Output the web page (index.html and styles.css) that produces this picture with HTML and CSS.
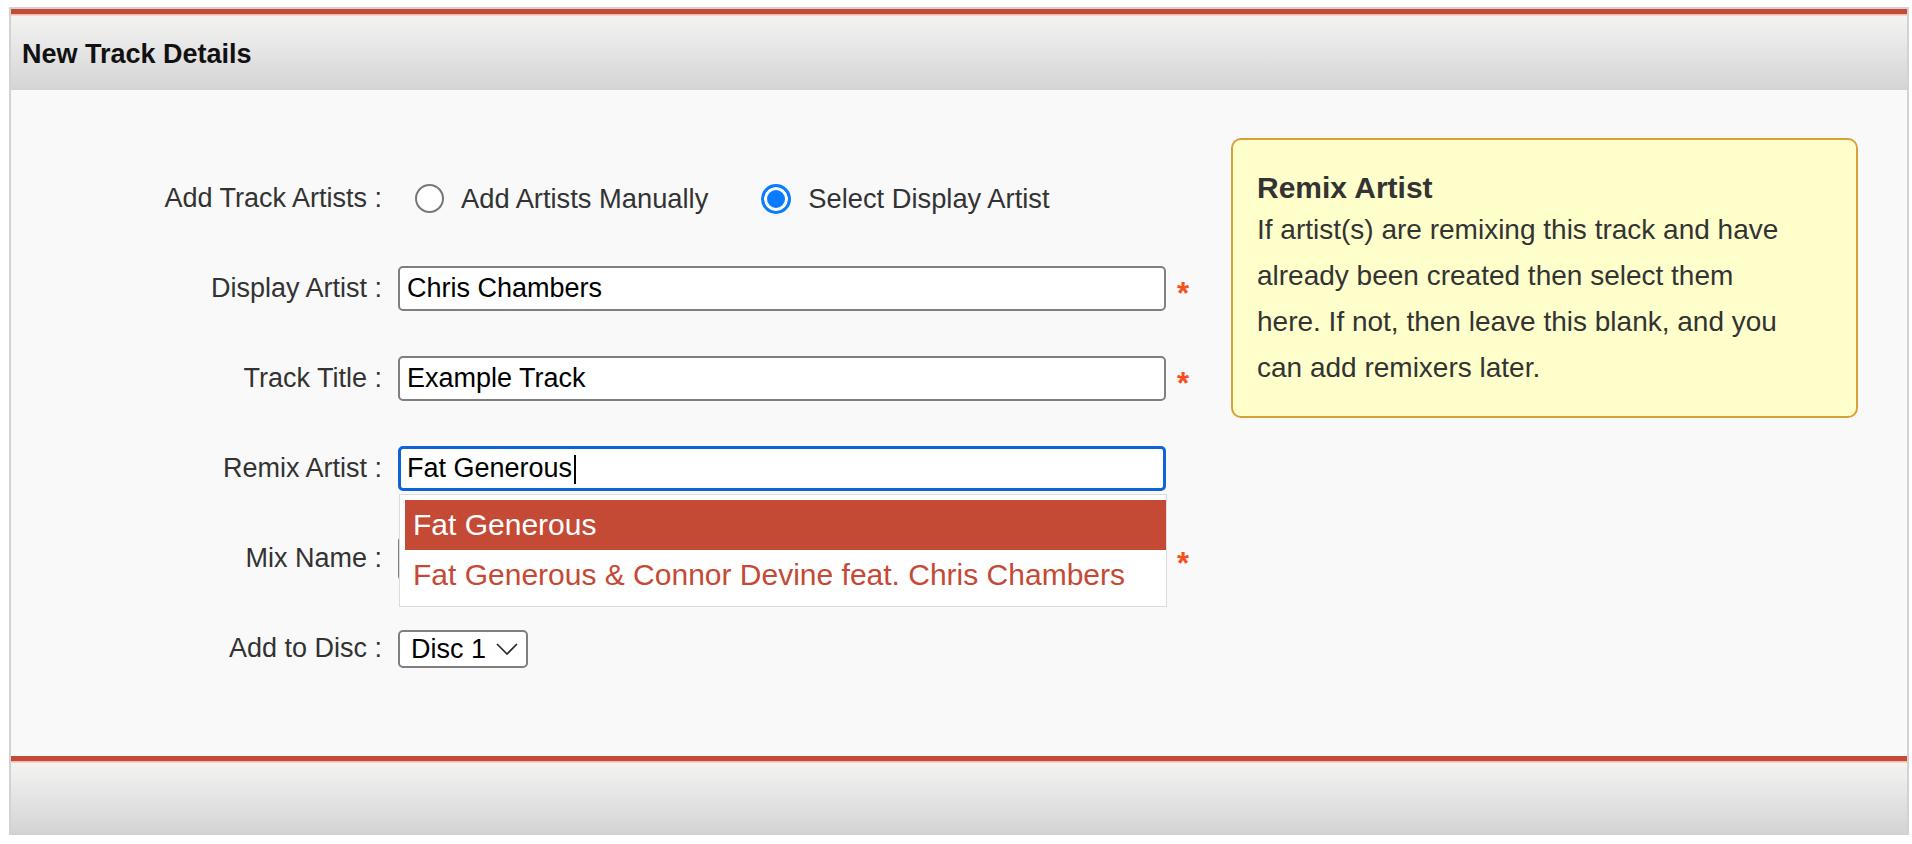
FILE: index.html
```html
<!DOCTYPE html>
<html lang="en">
<head>
<meta charset="utf-8">
<title>New Track Details</title>
<link rel="stylesheet" href="styles.css">
</head>
<body>
<section class="panel">
  <header class="panel-head">
    <h2 class="panel-title">New Track Details</h2>
  </header>
  <div class="panel-body">
    <form class="track-form">
      <label class="f-label">Add Track Artists :</label>
      <div class="radios">
        <label class="radio-opt"><input type="radio" name="mode" class="radio"> <span>Add Artists Manually</span></label>
        <label class="radio-opt radio-opt-2"><input type="radio" name="mode" class="radio" checked> <span>Select Display Artist</span></label>
      </div>
      <span></span>

      <label class="f-label">Display Artist :</label>
      <input class="f-input" type="text" value="Chris Chambers">
      <span class="req">*</span>

      <label class="f-label">Track Title :</label>
      <input class="f-input" type="text" value="Example Track">
      <span class="req">*</span>

      <label class="f-label">Remix Artist :</label>
      <div class="combo">
        <input class="f-input f-input-focus" type="text" value="Fat Generous">
        <span class="caret"></span>
        <ul class="suggest">
          <li class="suggest-item active">Fat Generous</li>
          <li class="suggest-item">Fat Generous &amp; Connor Devine feat. Chris Chambers</li>
        </ul>
      </div>
      <span></span>

      <label class="f-label">Mix Name :</label>
      <input class="f-input" type="text" value="">
      <span class="req">*</span>

      <label class="f-label">Add to Disc :</label>
      <div class="select-wrap">
        <select class="f-select"><option>Disc 1</option><option>Disc 2</option></select>
        <svg class="chev" width="22" height="12" viewBox="0 0 22 12"><path d="M1 1 L11 11 L21 1" fill="none" stroke="#222" stroke-width="1.6"/></svg>
      </div>
      <span></span>
    </form>
    <aside class="tip">
      <strong class="tip-title">Remix Artist</strong>
      <p class="tip-text">If artist(s) are remixing this track and have already been created then select them here. If not, then leave this blank, and you can add remixers later.</p>
    </aside>
  </div>
  <footer class="panel-foot"></footer>
</section>
</body>
</html>
```
FILE: styles.css
```css
html, body {
  margin: 0;
  padding: 0;
  background: #ffffff;
}
body {
  font-family: "Liberation Sans", Arial, Helvetica, sans-serif;
  color: #333;
}
.panel {
  margin: 7px 3px 0 9px;
  border: 2px solid #d2d2d2;
  border-bottom: none;
  background: #f9f9f9;
}
.panel-head {
  height: 71px;
  padding: 5px 0 0 11px;
  border-top: 5px solid #c44b37;
  background: linear-gradient(#f1b9a9 0, #f1b9a9 1px, #f3f3ef 2px, #e9e9e9 35%, #d4d4d4 100%);
}
.panel-title {
  margin: 0;
  font-size: 27px;
  line-height: 70px;
  font-weight: bold;
  color: #111;
}
.panel-body {
  height: 666px;
  display: flex;
  align-items: flex-start;
  background: #f9f9f9;
}
.track-form {
  display: grid;
  grid-template-columns: 371px 768px 14px;
  grid-auto-rows: 45px;
  column-gap: 16px;
  row-gap: 45px;
  padding-top: 86px;
  margin: 0;
}
.track-form > .req,
.track-form > span:empty {
  margin-left: -5px;
}
.f-label {
  align-self: center;
  text-align: right;
  font-size: 27px;
  color: #333;
  white-space: nowrap;
}
.radios {
  display: flex;
  align-items: center;
  font-size: 27.3px;
  color: #333;
  white-space: nowrap;
}
.radio-opt {
  display: flex;
  align-items: center;
  gap: 17px;
  margin-left: 17px;
}
.radio-opt span { display: inline; }
.radio-opt-2 { margin-left: 53px; }
.radio {
  appearance: none;
  -webkit-appearance: none;
  margin: 0;
  width: 29px;
  height: 29px;
  border-radius: 50%;
  border: 2px solid #777;
  background: #fff;
  box-sizing: border-box;
}
.radio:checked {
  border: 3px solid #0b7bff;
  background: #0b7bff;
  box-shadow: inset 0 0 0 3px #fff;
  width: 30px;
  height: 30px;
}
.f-input {
  box-sizing: border-box;
  width: 768px;
  height: 45px;
  margin: 0;
  padding: 0 7px;
  border: 2px solid #7f7f7f;
  border-radius: 5px;
  background: #fff;
  font-family: "Liberation Sans", Arial, Helvetica, sans-serif;
  font-size: 27px;
  color: #000;
  outline: none;
}
.f-input-focus {
  border: 3px solid #0f63d6;
  padding: 0 6px;
}
.req {
  align-self: center;
  color: #f4511e;
  font-size: 31px;
  font-weight: bold;
  line-height: 20px;
  padding-top: 11px;
}
.combo {
  position: relative;
}
.caret {
  position: absolute;
  left: 176px;
  top: 9px;
  width: 2px;
  height: 29px;
  background: #000;
}
.suggest {
  position: absolute;
  left: 1px;
  top: 48px;
  width: 768px;
  box-sizing: border-box;
  margin: 0;
  padding: 5px 0 6px 5px;
  list-style: none;
  background: #fff;
  border: 1px solid #dcdcdc;
  z-index: 2;
}
.suggest-item {
  height: 50px;
  line-height: 50px;
  padding-left: 8px;
  font-size: 30px;
  color: #c54a35;
  white-space: nowrap;
}
.suggest-item.active {
  background: #c54a35;
  color: #fff;
}
.select-wrap {
  position: relative;
  align-self: center;
  width: 130px;
  height: 38px;
}
.f-select {
  appearance: none;
  -webkit-appearance: none;
  box-sizing: border-box;
  width: 130px;
  height: 38px;
  margin: 0;
  padding: 0 0 0 11px;
  border: 2px solid #7f7f7f;
  border-radius: 5px;
  background: #fff;
  font-family: "Liberation Sans", Arial, Helvetica, sans-serif;
  font-size: 27px;
  color: #000;
}
.chev {
  position: absolute;
  right: 10px;
  top: 13px;
  pointer-events: none;
}
.tip {
  box-sizing: border-box;
  width: 627px;
  margin: 48px 0 0 35px;
  padding: 37px 62px 25px 24px;
  background: #ffffcc;
  border: 2px solid #d7a235;
  border-radius: 10px;
  color: #333;
  font-size: 28px;
}
.tip-title {
  display: block;
  font-weight: bold;
  font-size: 30px;
  line-height: 22px;
}
.tip-text {
  margin: 8px 0 0 0;
  line-height: 46px;
}
.panel-foot {
  height: 72px;
  border-top: 5px solid #c44b37;
  border-bottom: 2px solid #d2d2d2;
  background: linear-gradient(#f1b9a9 0, #f1b9a9 1px, #f3f3ef 2px, #e9e9e9 35%, #d4d4d4 100%);
}
```
